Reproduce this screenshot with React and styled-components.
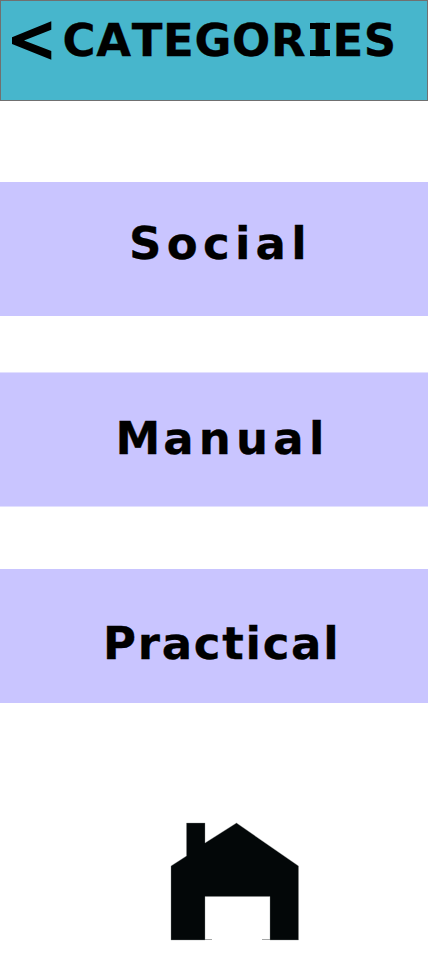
import React from "react";
import styled, { createGlobalStyle } from "styled-components";

const Global = createGlobalStyle`
  * { box-sizing: border-box; }
  body { margin: 0; background: #fff; }
`;
const Screen = styled.main`
  width: 428px; height: 957px; overflow: hidden;
  display: flex; flex-direction: column;
  font-family: Verdana, "DejaVu Sans", sans-serif;
  font-weight: 700; color: #000;
  -webkit-text-stroke: 0.3px #000;
`;
const Header = styled.header`
  height: 101px; flex: none; display: flex; align-items: flex-start;
  padding: 11px 0 0 10px;
  background: #47b6cc; border: 1px solid #707070;
`;
const Back = styled.svg`
  width: 41px; height: 42px; margin-top: 8px; flex: none;
`;
const Title = styled.h1`
  margin: 0 0 0 10.500px; font-size: 45px; line-height: 58px;
  letter-spacing: 0.65px; white-space: nowrap; font-kerning: none;
`;
/* Capital I with slab serifs drawn over the stem */
const SlabI = styled.span`
  position: relative; margin: 0 3.2px 0 5.6px;
  &::before, &::after {
    content: ""; position: absolute; left: -2px; width: 20px; height: 6px;
    background: #000;
  }
  &::before { top: 9px; }
  &::after { bottom: 11px; }
`;
const Narrow = styled.span`
  margin-right: -2.2px;
`;
const List = styled.nav`
  display: flex; flex-direction: column;
`;
const Category = styled.a`
  height: ${(p) => (p.$edged ? 135 : 134)}px; margin-top: ${(p) => p.$gap}px;
  padding: ${(p) => p.$top}px 0 0 ${(p) => p.$left}px;
  background: #c9c5ff; font-size: 45px; line-height: 58px;
  border: solid #e2e0ff; border-width: ${(p) => (p.$edged ? "1px 0" : "0")};
  letter-spacing: ${(p) => p.$spacing}px; white-space: nowrap; font-kerning: none;
`;
const Home = styled.svg`
  width: 130px; height: 119px; margin: 119px 0 0 170px; flex: none;
`;

export default function App() {
  return (
    <>
      <Global />
      <Screen>
        <Header>
          <Back viewBox="0 0 41 42"><path d="M40.300 1.200V9.700L13 20.500 40.300 31V39.800L1 24V17.200Z" /></Back>
          <Title>CATEGOR<SlabI>I</SlabI>ES</Title>
        </Header>
        <List>
          <Category $gap={81} $top={33} $left={129} $spacing={5.3}>Social</Category>
          <Category $gap={56} $top={37} $left={115.500} $spacing={5.200} $edged><Narrow>M</Narrow>anual</Category>
          <Category $gap={62} $top={46} $left={103} $spacing={1.750}>Practical</Category>
        </List>
        <Home viewBox="170 822 130 119">
          <path fill="#a5a7a7" d="M205 939H212V940H205ZM262 939H270V940H262Z" />
          <path fill="#030708" stroke="#888b8b" strokeWidth=".35" d="M186.500 823H205V843L236.500 823 298.500 866V940H270V896.500H205V940H171V866L186.500 856Z" />
        </Home>
      </Screen>
    </>
  );
}
